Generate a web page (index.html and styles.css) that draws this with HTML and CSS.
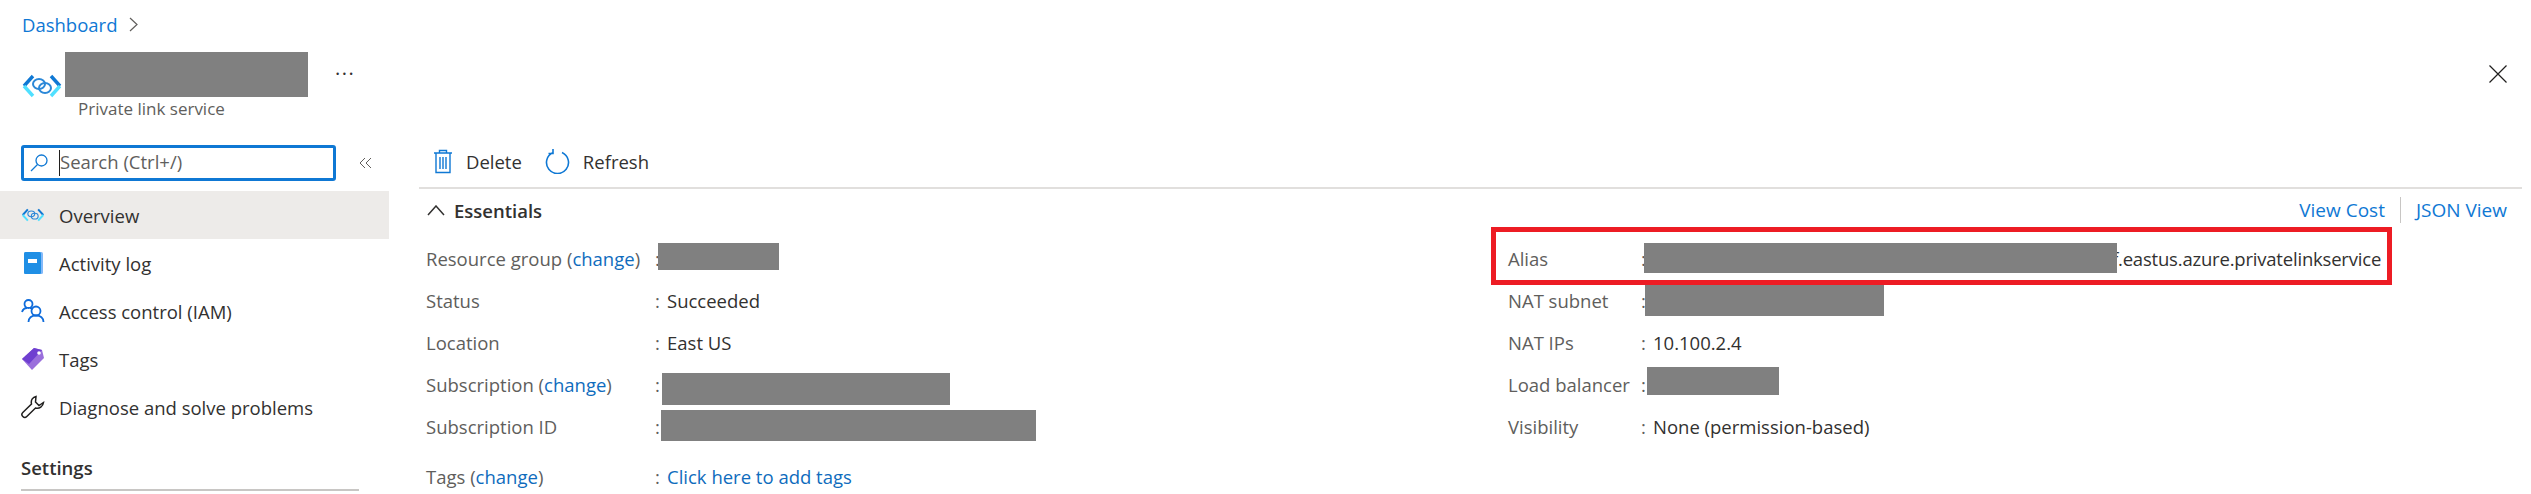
FILE: index.html
```html
<!DOCTYPE html>
<html lang="en">
  <head>
    <meta charset="UTF-8" />
    <title>Private link service</title>
    <link rel="stylesheet" href="styles.css">
  </head>
  <body>
    <nav class="crumb">
      <a href="#">Dashboard</a>
      <svg class="crumb-chev" viewBox="0 0 9 15"><path d="M1 1l7 6.5L1 14" /></svg>
    </nav>

    <header class="head">
      <svg class="head-icon" viewBox="0 0 42 24">
        <path class="br-dark" d="M12 2L3 12M30 2l9 10" />
        <path class="br-light" d="M3 12l9 10M39 12l-9 10" />
        <g class="chain">
          <ellipse cx="18" cy="10" rx="6" ry="5" />
          <ellipse cx="24" cy="14" rx="6" ry="5" />
        </g>
      </svg>
      <div class="head-text">
        <span class="redact redact-title"></span>
        <div class="head-sub">Private link service</div>
      </div>
      <span class="dots">···</span>
      <svg class="close" viewBox="0 0 18 18"><path d="M0.5 0.5l17 17M17.5 0.5l-17 17" /></svg>
    </header>

    <div class="blade">
      <aside class="side">
        <div class="search-row">
          <div class="search">
            <svg class="search-icon" viewBox="0 0 18 18"><circle cx="11.5" cy="6.5" r="5.5" /><path d="M7.5 10.5L1 17" /></svg>
            <span class="caret"></span>
            <span class="search-text">Search (Ctrl+/)</span>
          </div>
          <svg class="collapse" viewBox="0 0 13 12"><path d="M6 1L1 6l5 5M12 1L7 6l5 5" /></svg>
        </div>

        <ul class="menu">
          <li class="active">
            <svg class="menu-icon" viewBox="0 0 42 24">
              <path class="br-dark" d="M12 2L3 12M30 2l9 10" />
              <path class="br-light" d="M3 12l9 10M39 12l-9 10" />
              <g class="chain">
                <ellipse cx="18" cy="10" rx="6" ry="5" />
                <ellipse cx="24" cy="14" rx="6" ry="5" />
              </g>
            </svg>
            Overview
          </li>
          <li>
            <svg class="menu-icon" viewBox="0 0 24 24">
              <rect x="3" y="1" width="19" height="22" rx="1.5" fill="#83b9f9" />
              <rect x="3" y="1" width="17" height="22" rx="1.5" fill="#1f8fe5" />
              <rect x="7" y="8" width="9" height="4" fill="#fff" />
            </svg>
            Activity log
          </li>
          <li>
            <svg class="menu-icon iam" viewBox="0 0 24 24">
              <circle cx="7.5" cy="5" r="4" />
              <path d="M1 13c1-3 3-4 5-4M9 9c1 0 2 .5 3 1" />
              <circle cx="15" cy="12" r="4.5" />
              <path d="M7.5 23c0-4 3-6.500 7.500-6.500s7.500 2.500 7.500 6.500" />
            </svg>
            Access control (IAM)
          </li>
          <li>
            <svg class="menu-icon" viewBox="0 0 24 24">
              <path d="M1 12L13 1l8 2 2 8-12 12z" fill="#9a6fdc" />
              <path d="M1 12L13 1l8 2L8 17z" fill="#6f3fd0" />
              <circle cx="18" cy="6" r="1.800" fill="#fff" />
            </svg>
            Tags
          </li>
          <li>
            <svg class="menu-icon wrench" viewBox="0 0 24 24">
              <path d="M15 1.500c-3 .5-5.500 3.500-4.500 7.500L1.800 17.500c-1.500 1.500-1 3 0 4s2.700 1.300 4 0l8.700-8.500c4 1 7.500-1.500 8-5.500l-4.500 3-3.500-3.500z" />
            </svg>
            Diagnose and solve problems
          </li>
        </ul>

        <h3 class="side-title">Settings</h3>
      </aside>

      <main class="main">
        <div class="toolbar">
          <button class="tool">
            <svg class="tool-icon trash" viewBox="0 0 20 25">
              <path d="M1 4h18M6.500 4V1.500h7V4M3 4v19.500h14V4M7 8v12M10 8v12M13 8v12" />
            </svg>
            Delete
          </button>
          <button class="tool">
            <svg class="tool-icon refresh" viewBox="0 0 25 25">
              <path d="M8 3.500a11 11 0 1 0 9 0M8 0v4.500H3.500" />
            </svg>
            Refresh
          </button>
        </div>

        <div class="ess-head">
          <div class="ess-title">
            <svg class="ess-chev" viewBox="0 0 18 11"><path d="M1 10l8-9 8 9" /></svg>
            Essentials
          </div>
          <div class="ess-links">
            <a href="#">View Cost</a>
            <span class="ess-sep"></span>
            <a href="#">JSON View</a>
          </div>
        </div>

        <div class="ess-grid">
          <dl class="col col-left">
            <div class="row"><dt>Resource group (<a href="#">change</a>)</dt><dd><span class="colon">:</span><span class="redact r-group"></span></dd></div>
            <div class="row"><dt>Status</dt><dd><span class="colon">:</span><span class="val">Succeeded</span></dd></div>
            <div class="row"><dt>Location</dt><dd><span class="colon">:</span><span class="val">East US</span></dd></div>
            <div class="row"><dt>Subscription (<a href="#">change</a>)</dt><dd><span class="colon">:</span><span class="redact r-sub"></span></dd></div>
            <div class="row"><dt>Subscription ID</dt><dd><span class="colon">:</span><span class="redact r-subid"></span></dd></div>
            <div class="row row-tags"><dt>Tags (<a href="#">change</a>)</dt><dd><span class="colon">:</span><a class="val" href="#">Click here to add tags</a></dd></div>
          </dl>

          <dl class="col col-right">
            <div class="row alias"><dt>Alias</dt><dd><span class="colon">:</span><span class="redact r-alias"></span><span class="alias-text">f.eastus.azure.privatelinkservice</span></dd></div>
            <div class="row"><dt>NAT subnet</dt><dd><span class="colon">:</span><span class="redact r-subnet"></span></dd></div>
            <div class="row"><dt>NAT IPs</dt><dd><span class="colon">:</span><span class="val">10.100.2.4</span></dd></div>
            <div class="row"><dt>Load balancer</dt><dd><span class="colon">:</span><span class="redact r-lb"></span></dd></div>
            <div class="row"><dt>Visibility</dt><dd><span class="colon">:</span><span class="val">None (permission-based)</span></dd></div>
          </dl>
        </div>
      </main>
    </div>
  </body>
</html>
```

FILE: styles.css
```css
* {
  box-sizing: border-box;
}
html,
body {
  margin: 0;
  height: 494px;
  overflow: hidden;
  background: #fff;
}
body {
  font-family: "Open Sans", "Noto Sans", "Liberation Sans", sans-serif;
  font-size: 18.5px;
  color: #323130;
}
a {
  color: #0f6cbd;
  text-decoration: none;
}
ul,
dl,
dd,
h3 {
  margin: 0;
  padding: 0;
}

.crumb {
  height: 48px;
  padding: 0 0 0 22px;
  display: flex;
  align-items: center;
}
.crumb a {
  color: #0f78d4;
}
.crumb-chev {
  width: 9px;
  height: 15px;
  margin-left: 12px;
  fill: none;
  stroke: #605e5c;
  stroke-width: 1.2;
}

.head {
  height: 81px;
  padding-left: 21px;
  display: flex;
  align-items: flex-start;
}
.head-icon {
  width: 42px;
  height: 24px;
  margin: 26px 2px 0 0;
  flex: none;
}
.br-dark,
.br-light {
  fill: none;
  stroke-width: 3.4;
}
.br-dark {
  stroke: #0f78d4;
}
.br-light {
  stroke: #50e0ff;
}
.chain ellipse {
  fill: none;
  stroke: #2b88d8;
  stroke-width: 2;
}
.head-text {
  width: 270px;
  padding-top: 4px;
}
.redact {
  display: block;
  background: #808080;
  flex: none;
}
.redact-title {
  width: 243px;
  height: 45px;
}
.head-sub {
  margin: 0 0 0 13px;
  color: #605e5c;
  font-size: 17px;
  line-height: 24px;
}
.dots {
  color: #323130;
  font-size: 20px;
  line-height: 20px;
  letter-spacing: 1.5px;
  margin-top: 16px;
}
.close {
  width: 18px;
  height: 18px;
  margin: 17px 24px 0 auto;
  fill: none;
  stroke: #201f1e;
  stroke-width: 1.2;
}

.blade {
  display: grid;
  grid-template-columns: 419px 1fr;
}

.search-row {
  display: flex;
  align-items: center;
  padding: 16px 0 0 21px;
}
.search {
  width: 315px;
  height: 36px;
  border: 3px solid #0f78d4;
  border-radius: 3px;
  display: flex;
  align-items: center;
  padding-left: 6px;
}
.search-icon {
  width: 18px;
  height: 18px;
  fill: none;
  stroke: #0f78d4;
  stroke-width: 1.300;
  flex: none;
}
.caret {
  width: 1px;
  height: 26px;
  background: #201f1e;
  margin-left: 11px;
  flex: none;
}
.search-text {
  color: #605e5c;
  line-height: 24px;
  margin-top: -2px;
}
.collapse {
  width: 13px;
  height: 12px;
  margin-left: 23px;
  fill: none;
  stroke: #605e5c;
  stroke-width: 1;
}

.menu {
  list-style: none;
  width: 389px;
  margin-top: 10px;
}
.menu li {
  height: 48px;
  display: flex;
  align-items: center;
  padding-left: 21px;
  white-space: nowrap;
}
.menu li.active {
  background: #edebe9;
}
.menu-icon {
  width: 24px;
  height: 24px;
  margin-right: 14px;
  flex: none;
}
.iam circle,
.iam path {
  fill: none;
  stroke: #0f6cdb;
  stroke-width: 1.800;
}
.wrench path {
  fill: none;
  stroke: #201f1e;
  stroke-width: 1.500;
}

.side-title {
  margin: 25px 0 0 21px;
  width: 338px;
  height: 35px;
  font-size: 18.5px;
  font-weight: 600;
  line-height: 24px;
  border-bottom: 2px solid #c8c6c4;
}

.toolbar {
  height: 60px;
  display: flex;
  align-items: center;
  gap: 23px;
  padding: 6px 0 0 14px;
  border-bottom: 2px solid #e1dfdd;
  margin-right: 9px;
}
.tool {
  display: flex;
  align-items: center;
  border: 0;
  padding: 0;
  background: none;
  font: inherit;
  color: #323130;
}
.tool-icon {
  fill: none;
  stroke: #0f78d4;
  margin-right: 13px;
}
.trash {
  width: 20px;
  height: 25px;
  stroke-width: 1.400;
}
.refresh {
  width: 25px;
  height: 25px;
  stroke-width: 1.600;
}

.ess-head {
  height: 42px;
  display: flex;
  align-items: center;
  justify-content: space-between;
  padding-left: 8px;
  margin-right: 24px;
}
.ess-title {
  display: flex;
  align-items: center;
  font-weight: 600;
}
.ess-chev {
  width: 18px;
  height: 11px;
  margin-right: 9px;
  fill: none;
  stroke: #323130;
  stroke-width: 1.500;
}
.ess-links {
  display: flex;
  align-items: center;
  font-size: 19px;
}
.ess-links a {
  color: #0f78d4;
}
.ess-sep {
  width: 1px;
  height: 26px;
  background: #c8c6c4;
  margin: 0 15px;
}

.ess-grid {
  display: grid;
  grid-template-columns: 1082px 1fr;
  padding: 6px 0 0 7px;
}
.row {
  height: 42px;
  display: flex;
  align-items: center;
  white-space: nowrap;
}
.row dt {
  color: #605e5c;
}
.row-tags {
  margin-top: 8px;
}
.col-left dt {
  width: 229px;
}
.col-right dt {
  width: 133px;
}
.row dd {
  display: flex;
  align-items: center;
}
.colon {
  color: #605e5c;
  width: 4px;
}
.val {
  margin-left: 8px;
}
.alias-text {
  letter-spacing: -0.2px;
  margin-left: -5px;
}

.r-group {
  width: 121px;
  height: 27px;
  margin: -3px 0 0 -1px;
}
.r-sub {
  width: 288px;
  height: 32px;
  margin: 10px 0 0 3px;
}
.r-subid {
  width: 375px;
  height: 31px;
  margin: -1px 0 0 2px;
}
/* covers all of the alias but the end of its last hidden letter */
.r-alias {
  width: 473px;
  height: 30px;
  margin-left: -1px;
  position: relative;
  z-index: 1;
}
.r-subnet {
  width: 239px;
  height: 31px;
  margin: 1px 0 0 0;
}
.r-lb {
  width: 132px;
  height: 28px;
  margin: -6px 0 0 2px;
}

.alias {
  position: relative;
}
/* the red annotation sits on top of the row */
.alias::after {
  content: "";
  box-sizing: border-box;
  position: absolute;
  left: -17px;
  top: -10px;
  width: 901px;
  height: 58px;
  border: 5px solid #ed1c24;
}
```
